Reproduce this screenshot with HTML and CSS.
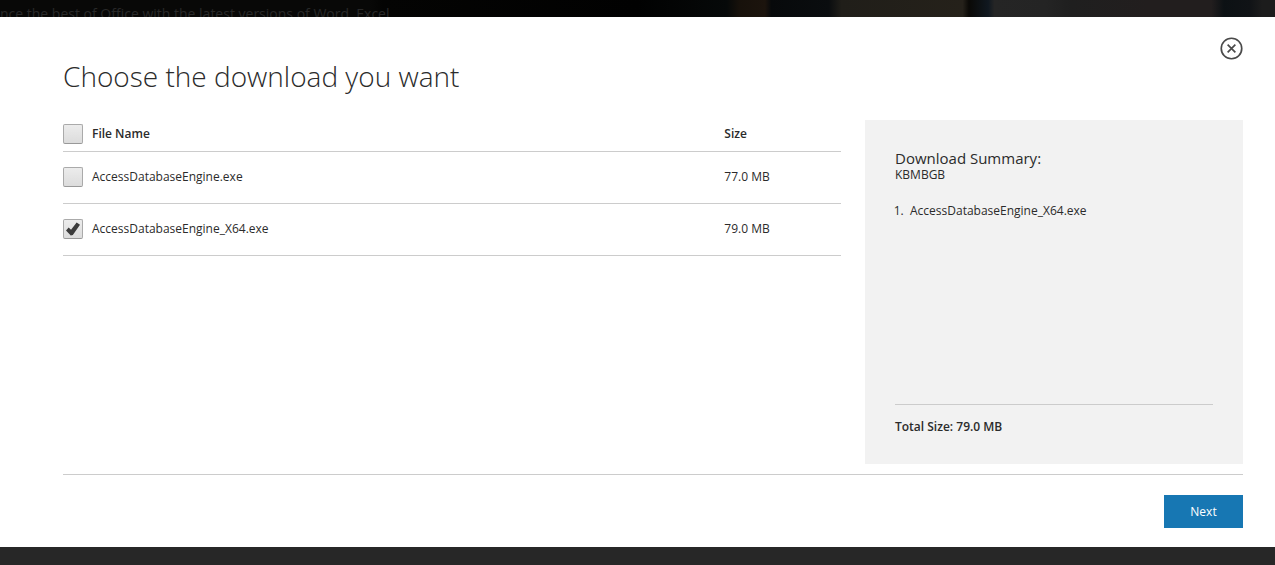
FILE: index.html
```html
<!DOCTYPE html>
<html lang="en">
<head>
<meta charset="utf-8">
<title>Choose the download you want</title>
<meta name="viewport" content="width=device-width, initial-scale=1">
<link rel="stylesheet" href="styles.css">
</head>
<body>
<div class="backdrop">
  <p class="backdrop-text">nce the best of Office with the latest versions of Word, Excel</p>
</div>
<main class="dialog" role="dialog" aria-labelledby="dialog-title">
  <button class="close" type="button" aria-label="Close">
    <svg class="close-icon" viewBox="0 0 22 22" aria-hidden="true">
      <circle cx="11" cy="11" r="9.8"/>
      <path d="M7.3 7.3l7.4 7.4M14.7 7.3l-7.4 7.4"/>
    </svg>
  </button>
  <h1 class="title" id="dialog-title">Choose the download you want</h1>
  <div class="content">
    <table class="files">
      <thead>
        <tr>
          <th class="name-col" scope="col"><label class="pick"><input class="check" type="checkbox">File Name</label></th>
          <th class="size-col" scope="col">Size</th>
        </tr>
      </thead>
      <tbody>
        <tr>
          <td><label class="pick"><input class="check" type="checkbox">AccessDatabaseEngine.exe</label></td>
          <td>77.0 MB</td>
        </tr>
        <tr>
          <td><label class="pick"><input class="check" type="checkbox" checked>AccessDatabaseEngine_X64.exe</label></td>
          <td>79.0 MB</td>
        </tr>
      </tbody>
    </table>
    <aside class="summary">
      <h2 class="summary-title">Download Summary:</h2>
      <p class="summary-units">KBMBGB</p>
      <ol class="summary-list">
        <li>AccessDatabaseEngine_X64.exe</li>
      </ol>
      <p class="total">Total Size: 79.0 MB</p>
    </aside>
  </div>
  <footer class="actions">
    <button class="next" type="button">Next</button>
  </footer>
</main>
</body>
</html>
```

FILE: styles.css
```css
* {
  box-sizing: border-box;
}

body {
  margin: 0;
  min-height: 100vh;
  background: #272727;
  color: #2b2b2b;
  font: 12px/18px "Open Sans", "Noto Sans", sans-serif;
}

.backdrop {
  height: 17px;
  overflow: hidden;
  background: linear-gradient(90deg,
    #080807 0, #080807 29%, #040403 30%, #010101 50%,
    #060909 57%, #17110b 58%, #1c140d 60%, #07090b 60.5%, #0a0d0f 65%,
    #201e19 66%, #25211a 75.5%, #0a0906 76%, #101820 77.5%,
    #252525 78%, #242424 82%, #1f1f1f 84%, #221e1e 90%, #221e1e 95%,
    #0c1114 96%, #101316 98%, #1c1c1c 99%);
}

.backdrop-text {
  margin: 0;
  padding-top: 4px;
  color: #292929;
  font-size: 14px;
  line-height: 20px;
  white-space: nowrap;
}

.dialog {
  position: relative;
  padding: 39px 32px 19px 63px;
  background: #fff;
}

.close {
  position: absolute;
  top: 20px;
  right: 32px;
  width: 23px;
  height: 23px;
  padding: 0;
  border: 0;
  background: none;
  cursor: pointer;
}

.close-icon {
  display: block;
  fill: none;
  stroke: #4a4a4a;
  stroke-width: 1.6;
}

.title {
  margin: 0 0 24px;
  font-size: 28px;
  font-weight: 300;
  line-height: 40px;
}

.content {
  display: grid;
  grid-template-columns: minmax(0, 1fr) 378px;
  gap: 24px;
  min-height: 344px;
}

.files {
  width: 100%;
  align-self: start;
  border-collapse: collapse;
  table-layout: fixed;
}

.files th,
.files td {
  height: 52px;
  padding: 0;
  border-bottom: 1px solid #ccc;
  text-align: left;
}

.files th {
  height: 31px;
  padding-bottom: 3px;
  font-weight: 600;
}

.name-col {
  width: 85%;
}

.pick {
  display: flex;
  align-items: center;
  gap: 9px;
}

.check {
  appearance: none;
  flex: none;
  width: 20px;
  height: 20px;
  margin: 0;
  border: 1px solid #aaa;
  border-bottom-color: #999;
  border-radius: 2px;
  background: linear-gradient(#ececec, #dcdcdc);
}

.check:checked::before {
  content: "";
  display: block;
  width: 14px;
  height: 14px;
  margin: 2px;
  background: #3c3c3c;
  clip-path: polygon(0 60%, 19% 40%, 36% 56%, 76% 3%, 100% 20%, 49% 92%, 34% 96%);
}

.summary {
  display: flex;
  flex-direction: column;
  padding: 29px 30px 28px;
  background: #f2f2f2;
}

.summary-title {
  margin: 0;
  font-size: 15px;
  font-weight: 400;
  line-height: 18px;
}

.summary-units {
  margin: 0;
  line-height: 16px;
}

.summary-list {
  margin: 19px 0 0;
  padding-left: 15px;
}

.summary-list li::marker {
  content: counter(list-item) ".\00a0\00a0";
}

.total {
  margin: auto 0 0;
  padding-top: 13px;
  border-top: 1px solid #ccc;
  font-weight: 600;
}

.actions {
  display: flex;
  justify-content: flex-end;
  margin-top: 10px;
  padding-top: 20px;
  border-top: 1px solid #ccc;
}

.next {
  min-width: 79px;
  padding: 8px 26px 7px;
  border: 0;
  background: #1777b3;
  color: #fff;
  font: inherit;
  cursor: pointer;
}
```
